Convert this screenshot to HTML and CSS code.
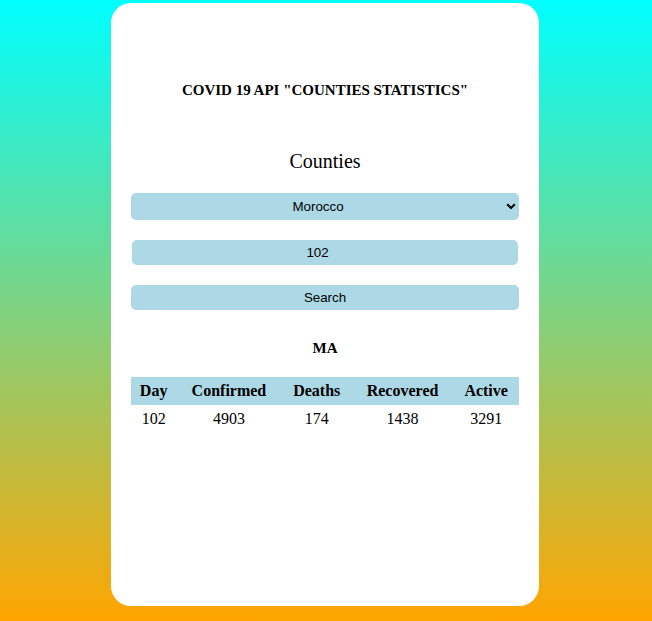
FILE: index.html
```html
<!DOCTYPE html>
<html lang="en">
<head>
<meta charset="utf-8">
<title>COVID 19 API</title>
<link rel="stylesheet" href="styles.css">
</head>
<body>
  <main class="card">
    <h4 class="title">COVID 19 API "COUNTIES STATISTICS"</h4>
    <label class="label" for="country">Counties</label>
    <div class="select-wrap">
      <select id="country" class="field select">
        <option>Morocco</option>
      </select>
      <svg class="chevron" width="10" height="7" viewBox="0 0 10 7" aria-hidden="true">
        <path d="M1.2 1.2 L5 5 L8.8 1.2" fill="none" stroke="#000" stroke-width="2"/>
      </svg>
    </div>
    <input class="field input" type="text" value="102">
    <button class="field button" type="button">Search</button>
    <h4 class="code">MA</h4>
    <table class="stats">
      <thead>
        <tr><th>Day</th><th>Confirmed</th><th>Deaths</th><th>Recovered</th><th>Active</th></tr>
      </thead>
      <tbody>
        <tr><td>102</td><td>4903</td><td>174</td><td>1438</td><td>3291</td></tr>
      </tbody>
    </table>
  </main>
</body>
</html>
```
FILE: styles.css
```css
html, body {
  margin: 0;
  padding: 0;
}
body {
  min-height: 621px;
  background: linear-gradient(to bottom, #00ffff 0%, #ffa500 100%);
  font-family: "Liberation Serif", "Times New Roman", serif;
  color: #000;
  overflow: hidden;
}
.card {
  width: 428px;
  height: 603px;
  margin: 3px 0 0 111px;
  background: #fff;
  border-radius: 20px;
  padding: 0 20px;
  box-sizing: border-box;
  display: flex;
  flex-direction: column;
}
.title {
  margin: 79px 0 0;
  font-size: 15px;
  line-height: 17px;
  font-weight: bold;
  text-align: center;
}
.label {
  margin-top: 51px;
  font-size: 20px;
  line-height: 23px;
  text-align: center;
}
.select-wrap {
  position: relative;
  margin-top: 20px;
  height: 27px;
}
.field {
  display: block;
  box-sizing: border-box;
  border: none;
  border-radius: 5px;
  background: #add8e6;
  font-family: "Liberation Sans", Arial, sans-serif;
  font-size: 13.33px;
  color: #000;
  text-align: center;
  padding: 0;
  outline: none;
}
.select {
  width: 100%;
  height: 27px;
  padding-right: 14px;
  -webkit-appearance: none;
  appearance: none;
  text-align-last: center;
}
.chevron {
  position: absolute;
  right: 3px;
  top: 10px;
  pointer-events: none;
}
.input {
  margin: 20px 1px 0;
  width: 386px;
  height: 25px;
  padding-right: 15px;
}
.button {
  margin-top: 20px;
  width: 100%;
  height: 25px;
}
.code {
  margin: 30px 0 0;
  font-size: 15px;
  line-height: 17px;
  font-weight: bold;
  text-align: center;
}
.stats {
  margin-top: 20px;
  width: 100%;
  border-collapse: collapse;
  font-size: 16px;
}
.stats th {
  background: #add8e6;
  padding: 5px 4px;
  line-height: 18px;
  font-weight: bold;
}
.stats td {
  padding: 5px 4px;
  line-height: 18px;
  text-align: center;
}
```
